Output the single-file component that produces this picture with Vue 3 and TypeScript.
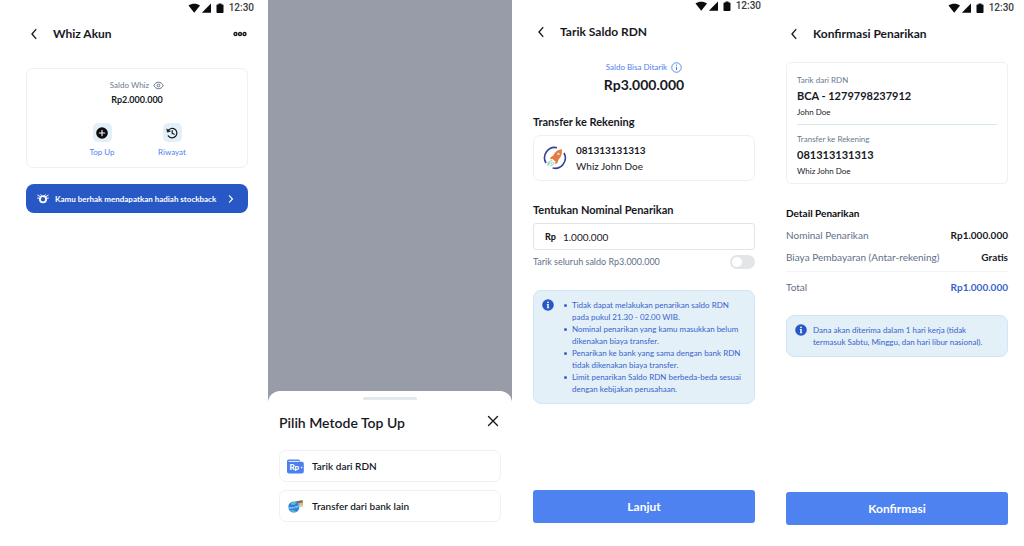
<script setup lang="ts">
import { defineComponent, h, ref } from 'vue'

interface DetailRow {
  label: string
  value: string
}

const StatusBar = defineComponent({
  name: 'StatusBar',
  setup: () => () =>
    h('div', { class: 'status' }, [
      h('svg', { viewBox: '0 0 37 12', width: 37, height: 12, 'aria-hidden': 'true' }, [
        h('path', { d: 'M0.5 3.6C3.8 1.2 8.7 1.2 12 3.6L6.25 10.8Z' }),
        h('path', { d: 'M23 1.6V10.8H13.8Z' }),
        h('path', { d: 'M30.5 1.4h3v1h1.300q.7 0 .7.7v7.200q0 .7-.7.7h-5.600q-.7 0-.7-.7V3.100q0-.7.7-.7h1.300z' }),
      ]),
      h('span', '12:30'),
    ]),
})

const BackIcon = defineComponent({
  name: 'BackIcon',
  setup: () => () =>
    h('svg', { viewBox: '0 0 8 12', width: 8, height: 12, 'aria-hidden': 'true' }, [
      h('path', {
        d: 'M5.8 1.6 2 6l3.8 4.4',
        fill: 'none',
        stroke: '#17191f',
        'stroke-width': 1.4,
        'stroke-linecap': 'round',
      }),
    ]),
})

const InfoIcon = defineComponent({
  name: 'InfoIcon',
  setup: () => () =>
    h('svg', { viewBox: '0 0 12 12', width: 12, height: 12, 'aria-hidden': 'true' }, [
      h('circle', { cx: 6, cy: 6, r: 5.8, fill: '#2858c5' }),
      h('circle', { cx: 6, cy: 3.3, r: 0.9, fill: '#fff' }),
      h('path', { d: 'M4.9 5.1h1.8v3.4h.6v.8H4.800v-.8h.5V5.900h-.4z', fill: '#fff' }),
    ]),
})

const amount = ref('1.000.000')
const withdrawAll = ref(false)

const notes: string[] = [
  'Tidak dapat melakukan penarikan saldo RDN pada pukul 21.30 - 02.00 WIB.',
  'Nominal penarikan yang kamu masukkan belum dikenakan biaya transfer.',
  'Penarikan ke bank yang sama dengan bank RDN tidak dikenakan biaya transfer.',
  'Limit penarikan Saldo RDN berbeda-beda sesuai dengan kebijakan perusahaan.',
]

const details: DetailRow[] = [
  { label: 'Nominal Penarikan', value: 'Rp1.000.000' },
  { label: 'Biaya Pembayaran (Antar-rekening)', value: 'Gratis' },
]
</script>

<template>
  <main class="board">
    <section class="screen account">
      <StatusBar />
      <header class="bar">
        <button type="button" class="icon-btn" aria-label="Kembali"><BackIcon /></button>
        <h1>Whiz Akun</h1>
        <button type="button" class="icon-btn more" aria-label="Menu">
          <svg viewBox="0 0 14 6" width="14" height="6" fill="none" stroke="#17191f" stroke-width="1.4">
            <circle cx="2.5" cy="3" r="1.5" /><circle cx="7" cy="3" r="1.5" /><circle cx="11.5" cy="3" r="1.5" />
          </svg>
        </button>
      </header>

      <div class="card balance">
        <p class="caption">
          Saldo Whiz
          <svg viewBox="0 0 12 10" width="11" height="9" fill="none" stroke="#5f7088" stroke-width="1.1">
            <path d="M.8 5C3 .2 9 .2 11.2 5 9 9.8 3 9.8.8 5Z" /><circle cx="6" cy="5" r="1.5" />
          </svg>
        </p>
        <p class="balance-value">Rp2.000.000</p>
        <div class="actions">
          <button type="button" class="action">
            <span class="tile">
              <svg viewBox="0 0 12 12" width="12" height="12">
                <circle cx="6" cy="6" r="5.8" fill="#0a0c10" />
                <path d="M6 3.3v5.4M3.3 6h5.4" stroke="#fff" stroke-width="1.1" stroke-linecap="round" />
              </svg>
            </span>
            Top Up
          </button>
          <button type="button" class="action">
            <span class="tile">
              <svg viewBox="0 0 12 12" width="12" height="12" fill="none" stroke="#17191f" stroke-width="1.2" stroke-linecap="round">
                <path d="M2 3.900A4.700 4.700 0 1 1 2.300 8.800" />
                <path d="M.7 2.300 1.500 5.200 4.200 4.300Z" fill="#17191f" stroke-width=".6" />
                <path d="M6.200 3.700v2.700l2 .8" />
              </svg>
            </span>
            Riwayat
          </button>
        </div>
      </div>

      <button type="button" class="banner">
        <svg viewBox="0 0 12 10" width="12" height="10">
          <circle cx="6" cy="5.300" r="3.100" fill="none" stroke="#fff" stroke-width="1.800" />
          <path d="M.8 1.200 2.800 2.400M.6 4l1.600.3M11.200 1.200 9.200 2.400M11.400 4l-1.600.3M3.600.8l1 1M8.400.8l-1 1" stroke="#fff" stroke-width="1" stroke-linecap="round" />
        </svg>
        <span class="banner-text">Kamu berhak mendapatkan hadiah stockback</span>
        <svg viewBox="0 0 6 8" width="6" height="8">
          <path d="M1.500.8 4.500 4l-3 3.200" fill="none" stroke="#fff" stroke-width="1.200" stroke-linecap="round" />
        </svg>
      </button>
    </section>

    <section class="backdrop">
      <div class="sheet">
        <span class="handle"></span>
        <header class="sheet-head">
          <h2>Pilih Metode Top Up</h2>
          <button type="button" class="icon-btn" aria-label="Tutup">
            <svg viewBox="0 0 12 12" width="12" height="12">
              <path d="M1.500 1.500l9 9M10.500 1.500l-9 9" stroke="#17191f" stroke-width="1.400" stroke-linecap="round" />
            </svg>
          </button>
        </header>
        <div class="options">
          <button type="button" class="card option">
            <svg viewBox="0 0 17 15" width="17" height="15">
              <path d="M0 2.300Q0 .4 1.900.4H11.500Q13 .4 13 1.900V2.700H14.900Q16.800 2.700 16.800 4.600V12.500Q16.800 14.400 14.900 14.400H1.900Q0 14.400 0 12.500Z" fill="#4b80ef" />
              <path d="M1.600 2.400H12.400" stroke="#fff" stroke-width=".9" />
              <text x="2.400" y="11.200" class="wallet-text">Rp</text>
              <circle cx="14.600" cy="8.600" r=".8" fill="#fff" />
            </svg>
            Tarik dari RDN
          </button>
          <button type="button" class="card option">
            <svg viewBox="0 0 17 15" width="17" height="15">
              <path d="M8.500 2.400 15 1.200Q16 1 16 2L15.800 7.300 10 9Z" fill="#e9b65b" />
              <path d="M8 2.600 15.200 1.200 16 3.300 9 5Z" fill="#6b7078" />
              <circle cx="6.800" cy="8" r="5.500" fill="#2f7de1" />
              <path d="M3.600 3.800Q7 2.200 10 3.800L8 5.600 4.600 5.900Z" fill="#57c7b4" />
              <path d="M2.600 11.200Q6 9.900 9.800 12.500 5.500 14.600 2.600 11.200Z" fill="#46b7c8" />
              <path d="M.8 9Q7 9.600 14.400 6.200" fill="none" stroke="#a7d8fa" stroke-width="1.700" />
              <path d="M2 9.100Q7 9.500 12 7.300" fill="none" stroke="#2464c8" stroke-width=".7" stroke-dasharray="1.200 .7" />
            </svg>
            Transfer dari bank lain
          </button>
        </div>
      </div>
    </section>

    <section class="screen withdraw">
      <StatusBar />
      <header class="bar">
        <button type="button" class="icon-btn" aria-label="Kembali"><BackIcon /></button>
        <h1>Tarik Saldo RDN</h1>
      </header>
      <div class="available">
        <p class="caption link">
          Saldo Bisa Ditarik
          <svg viewBox="0 0 12 12" width="11" height="11">
            <circle cx="6" cy="6" r="5.200" fill="none" stroke="#4e82f0" stroke-width="1" />
            <path d="M6 5.200v3.600" stroke="#4e82f0" stroke-width="1.200" />
            <circle cx="6" cy="3.400" r=".8" fill="#4e82f0" />
          </svg>
        </p>
        <p class="available-value">Rp3.000.000</p>
      </div>

      <h2 class="label">Transfer ke Rekening</h2>
      <div class="card recipient">
        <svg viewBox="0 0 24 24" width="24" height="24">
          <path d="M14 1.700A10.300 10.300 0 0 0 3 17" fill="none" stroke="#34409a" stroke-width="1.600" />
          <path d="M21 7A10.300 10.300 0 0 1 9.600 22" fill="none" stroke="#34409a" stroke-width="1.600" />
          <path d="M18.800 3.200C14.500 3.600 11.600 6.200 10.300 9.400L7.600 11.300 7.200 13.300 9.700 13 12.400 15.500 12.300 18.400 14.500 16.800 15.500 13.500C18.300 11 19.400 7.500 18.800 3.200Z" fill="#e27b45" />
          <circle cx="15.400" cy="7.900" r="1.200" fill="#f6d9c8" />
          <path d="M9.400 14.200Q5.800 15 6 18.800M11.200 16Q10.600 19.400 7 20M9.500 16.300Q8 17 7.700 18.500M5.500 15.500Q4.600 17.500 5.200 19.800" fill="none" stroke="#9bd3c4" stroke-width="1.100" />
        </svg>
        <div>
          <p class="recipient-number">081313131313</p>
          <p class="recipient-name">Whiz John Doe</p>
        </div>
      </div>

      <label class="label" for="amount">Tentukan Nominal Penarikan</label>
      <div class="field">
        <span class="currency">Rp</span>
        <input id="amount" v-model="amount" type="text" inputmode="numeric" />
      </div>
      <label class="toggle-row">
        <span>Tarik seluruh saldo Rp3.000.000</span>
        <input v-model="withdrawAll" type="checkbox" class="switch" />
      </label>

      <aside class="notice">
        <InfoIcon />
        <ul>
          <li v-for="note in notes" :key="note">{{ note }}</li>
        </ul>
      </aside>
      <button type="button" class="primary">Lanjut</button>
    </section>

    <section class="screen confirm">
      <StatusBar />
      <header class="bar">
        <button type="button" class="icon-btn" aria-label="Kembali"><BackIcon /></button>
        <h1>Konfirmasi Penarikan</h1>
      </header>
      <div class="card parties">
        <div class="party">
          <p class="party-label">Tarik dari RDN</p>
          <p class="party-number">BCA - 1279798237912</p>
          <p class="party-name">John Doe</p>
        </div>
        <div class="party">
          <p class="party-label">Transfer ke Rekening</p>
          <p class="party-number">081313131313</p>
          <p class="party-name">Whiz John Doe</p>
        </div>
      </div>

      <h2 class="detail-title">Detail Penarikan</h2>
      <dl class="details">
        <div v-for="row in details" :key="row.label" class="detail">
          <dt>{{ row.label }}</dt>
          <dd>{{ row.value }}</dd>
        </div>
        <div class="detail total">
          <dt>Total</dt>
          <dd>Rp1.000.000</dd>
        </div>
      </dl>

      <aside class="notice">
        <InfoIcon />
        <p>Dana akan diterima dalam 1 hari kerja (tidak termasuk Sabtu, Minggu, dan hari libur nasional).</p>
      </aside>
      <button type="button" class="primary">Konfirmasi</button>
    </section>
  </main>
</template>

<style>
body {
  margin: 0;
  background: #fff;
}
</style>

<style scoped>
.board {
  display: grid;
  grid-template-columns: 268fr 244fr 256fr 256fr;
  min-height: 100vh;
  font-family: Lato, "Open Sans", sans-serif;
  color: #17191f;
}
.board * {
  box-sizing: border-box;
}
h1,
h2,
p,
dl,
dd,
ul {
  margin: 0;
}
button {
  padding: 0;
  border: 0;
  background: none;
  color: inherit;
  font-family: inherit;
  cursor: pointer;
}
svg {
  flex: none;
}
.screen {
  display: flex;
  flex-direction: column;
}
.account {
  padding: 2px 20px 0 26px;
}
.withdraw {
  padding: 0 13px 23px 21px;
}
.confirm {
  padding: 2px 16px 21px 18px;
}
.status {
  display: flex;
  justify-content: flex-end;
  align-items: center;
  gap: 4px;
  height: 12px;
  margin-right: -6px;
  font: 500 10px/12px Roboto, sans-serif;
  color: #3a3c42;
}
.status :deep(svg) {
  fill: #0a0c10;
}
.bar {
  display: flex;
  align-items: center;
  height: 20px;
  margin-top: 10px;
  padding: 0 1px 0 4px;
}
.bar h1 {
  flex: 1;
  margin-left: 15px;
  font-size: 12px;
  line-height: 20px;
  font-weight: 700;
}
.icon-btn {
  display: flex;
}
.card {
  border: 1px solid #eef0f2;
  border-radius: 7px;
  background: #fff;
}
.caption {
  display: flex;
  align-items: center;
  gap: 4px;
  font-size: 8px;
  line-height: 12px;
  color: #6a7a90;
}
.caption.link {
  color: #4e82f0;
}

/* Account */
.balance {
  display: flex;
  flex-direction: column;
  align-items: center;
  margin-top: 24px;
  padding: 10px 0 9px;
}
.balance-value {
  margin-top: 2px;
  font-size: 9px;
  line-height: 14px;
  font-weight: 700;
}
.actions {
  display: flex;
  margin-top: 16px;
}
.action {
  display: flex;
  flex-direction: column;
  align-items: center;
  gap: 4px;
  width: 70px;
  font-size: 8px;
  line-height: 12px;
  color: #4e82f0;
}
.tile {
  display: flex;
  align-items: center;
  justify-content: center;
  width: 19px;
  height: 19px;
  border-radius: 5px;
  background: #e3f0f8;
}
.banner {
  display: flex;
  align-items: center;
  gap: 6px;
  height: 29px;
  margin-top: 16px;
  padding: 0 14px 0 11px;
  border-radius: 8px;
  background: #2858c5;
  color: #fff;
  font-size: 8px;
  line-height: 12px;
  font-weight: 700;
}
.banner-text {
  flex: 1;
  text-align: left;
}

/* Bottom sheet */
.backdrop {
  display: flex;
  flex-direction: column;
  justify-content: flex-end;
  background: #989ca9;
}
.sheet {
  display: flex;
  flex-direction: column;
  padding: 6px 11px 24px;
  border-radius: 12px 12px 0 0;
  background: #fff;
}
.handle {
  align-self: center;
  width: 54px;
  height: 3px;
  border-radius: 2px;
  background: #e3e8ec;
}
.sheet-head {
  display: flex;
  align-items: flex-start;
  justify-content: space-between;
  margin-top: 13px;
  padding-right: 2px;
}
.sheet-head h2 {
  font-size: 14px;
  line-height: 20px;
  font-weight: 600;
}
.sheet-head .icon-btn {
  padding-top: 2px;
}
.options {
  display: flex;
  flex-direction: column;
  gap: 8px;
  margin-top: 17px;
}
.option {
  display: flex;
  align-items: center;
  gap: 8px;
  height: 32px;
  padding: 0 7px;
  font-size: 10px;
  font-weight: 600;
}
.wallet-text {
  font-size: 8px;
  font-weight: 900;
  fill: #fff;
}

/* Withdraw */
.available {
  display: flex;
  flex-direction: column;
  align-items: center;
  margin-top: 19px;
  margin-bottom: 20px;
}
.available-value {
  margin-top: 2px;
  font-size: 14px;
  line-height: 20px;
  font-weight: 700;
}
.label {
  font-size: 11px;
  line-height: 14px;
  font-weight: 700;
}
.recipient {
  display: flex;
  align-items: center;
  gap: 9px;
  margin-top: 6px;
  margin-bottom: 22px;
  padding: 6px 9px;
}
.recipient-number,
.recipient-name {
  font-size: 10px;
  line-height: 16px;
}
.recipient-number {
  font-weight: 700;
}
.field {
  display: flex;
  align-items: center;
  gap: 7px;
  height: 27px;
  margin-top: 6px;
  padding: 0 11px;
  border: 1px solid #dfe6ea;
  border-radius: 3px;
}
.currency {
  font-size: 9px;
  font-weight: 900;
}
.field input {
  flex: 1;
  min-width: 0;
  padding: 0;
  border: 0;
  outline: 0;
  background: none;
  color: inherit;
  font-family: inherit;
  font-size: 10px;
}
.toggle-row {
  display: flex;
  align-items: center;
  justify-content: space-between;
  margin-top: 5px;
  font-size: 9px;
  line-height: 14px;
  color: #5f7088;
}
.switch {
  display: flex;
  appearance: none;
  width: 25px;
  height: 14px;
  margin: 0;
  padding: 2px;
  border-radius: 7px;
  background: #e3e6e9;
}
.switch::before {
  content: "";
  width: 10px;
  height: 10px;
  border-radius: 5px;
  background: #fff;
}
.switch:checked {
  justify-content: flex-end;
  background: #4e82f0;
}
.notice {
  display: flex;
  gap: 6px;
  margin-top: 21px;
  padding: 8px;
  border: 1px solid #cfe5f8;
  border-radius: 8px;
  background: #e3f0f8;
  color: #3763cb;
  font-size: 8px;
  line-height: 12px;
}
.notice ul {
  padding-left: 4px;
  list-style: none;
}
.notice li {
  display: flex;
  gap: 5px;
}
.notice li::before {
  content: "";
  flex: none;
  width: 3px;
  height: 3px;
  margin-top: 5px;
  border-radius: 50%;
  background: #3763cb;
}
.primary {
  height: 33px;
  margin-top: auto;
  border-radius: 3px;
  background: #4e82f0;
  color: #fff;
  font-size: 12px;
  font-weight: 700;
}

/* Confirmation */
.parties {
  margin-top: 18px;
  padding: 11px 10px 6px;
  border-radius: 5px;
}
.party {
  display: flex;
  flex-direction: column;
  gap: 2px;
}
.party + .party {
  margin-top: 6px;
  padding-top: 8px;
  border-top: 1px solid #d5e6ee;
}
.party-label,
.party-name {
  font-size: 8px;
  line-height: 12px;
}
.party-label {
  color: #6a7a90;
}
.party-number {
  font-size: 11px;
  line-height: 16px;
  font-weight: 700;
}
.detail-title {
  margin-top: 22px;
  font-size: 10px;
  line-height: 14px;
  font-weight: 700;
  color: #0a0c10;
}
.detail {
  display: flex;
  justify-content: space-between;
  margin-top: 8px;
  font-size: 10px;
  line-height: 14px;
}
.detail dt {
  color: #5f7088;
}
.detail dd {
  font-weight: 700;
}
.detail.total {
  margin-top: 7px;
  padding-top: 8px;
  border-top: 1px solid #f3f4f6;
}
.detail.total dd {
  color: #3763cb;
}
</style>
